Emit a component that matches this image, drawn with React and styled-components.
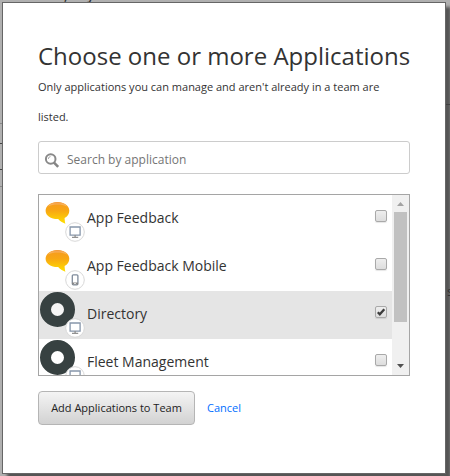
import React, { useState } from "react";
import styled, { createGlobalStyle } from "styled-components";

const GlobalStyle = createGlobalStyle`
  *, *::before, *::after { box-sizing: border-box; }
  body {
    margin: 0;
    background: #b0b0b0;
    font-family: "Open Sans", sans-serif;
    color: #333;
    overflow: hidden;
  }
`;

const Page = styled.main`
  position: relative;
  width: 450px;
  height: 476px;
  padding: 2px;
  overflow: hidden;
`;

const Rule = styled.span`
  position: absolute;
  top: ${(p) => p.$top}px;
  ${(p) => p.$side}: 0;
  width: ${(p) => (p.$side === "left" ? 2 : 4)}px;
  height: 1px;
  background: ${(p) => p.$color};
`;

const Behind = styled.span`
  position: absolute;
  left: ${(p) => p.$left}px;
  top: ${(p) => p.$top}px;
  font-size: 13px;
  font-weight: ${(p) => (p.$light ? 400 : 600)};
  line-height: 16px;
  color: #303030;
`;

const Dialog = styled.section`
  position: relative;
  width: 444px;
  height: 472px;
  padding: 37px 35px 0;
  background: #fff;
  border: 1px solid #666;
  box-shadow: 5px 5px 3px #555;
`;

const Title = styled.h1`
  margin: 0;
  font-size: 24px;
  font-weight: 400;
  line-height: 31px;
  white-space: nowrap;
`;

const Description = styled.p`
  margin: 1px 0 0;
  font-size: 11px;
  line-height: 30px;
`;

const SearchField = styled.label`
  display: flex;
  align-items: center;
  height: 33px;
  margin-top: 9px;
  padding: 4px 0 0 5px;
  border: 1px solid #ccc;
  border-radius: 3px;
`;

const SearchInput = styled.input`
  flex: 1;
  min-width: 0;
  margin-left: 7px;
  padding: 0 0 1px;
  border: 0;
  outline: 0;
  background: none;
  font: 12px "Open Sans", sans-serif;
  color: #333;
  &::placeholder { color: #757575; opacity: 1; }
`;

const ListBox = styled.div`
  display: flex;
  height: 182px;
  margin-top: 20px;
  border: 1px solid #a5a5a5;
  overflow: hidden;
`;

const List = styled.ul`
  flex: 1;
  margin: 0;
  padding: 0;
  list-style: none;
`;

const Row = styled.li`
  display: flex;
  align-items: center;
  height: 48px;
  padding-right: 5px;
  background: ${(p) => (p.$selected ? "#e5e5e5" : "#fff")};
`;

const RowName = styled.span`
  flex: 1;
  margin-left: 2px;
  font-size: 14px;
  line-height: 20px;
  padding-bottom: 2px;
`;

const Check = styled.button`
  width: 12px;
  height: 12px;
  margin-bottom: 6px;
  padding: 0;
  display: flex;
  border: 1px solid #a9a9a9;
  border-radius: 2px;
  background: linear-gradient(#eee, #ddd);
  box-shadow: 0 1px 1px rgba(0, 0, 0, 0.1);
`;

const Scrollbar = styled.div`
  display: flex;
  flex-direction: column;
  align-items: center;
  width: 17px;
  background: #f0f0f0;
`;

const ScrollArrow = styled.svg`
  display: block;
  width: 17px;
  height: 17px;
  flex: none;
`;

const Thumb = styled.div`
  width: 13px;
  height: 110px;
  margin-bottom: auto;
  background: #c1c1c1;
`;

const Actions = styled.footer`
  display: flex;
  align-items: center;
  gap: 12px;
  margin-top: 15px;
`;

const SubmitButton = styled.button`
  width: 157px;
  height: 34px;
  padding: 0 0 2px;
  border: 1px solid #b5b5b5;
  border-radius: 4px;
  background: linear-gradient(#f4f4f4, #d2d2d2);
  font: 11px "Open Sans", sans-serif;
  color: #222;
  white-space: nowrap;
`;

const Cancel = styled.a`
  font-size: 11px;
  line-height: 16px;
  color: #006eff;
  text-decoration: none;
`;

const Glyph = styled.svg`
  display: block;
  flex: none;
`;

function SearchIcon() {
  return (
    <Glyph width="16" height="19" viewBox="0 0 16 19" fill="none">
      <circle cx="6.7" cy="9" r="4.8" stroke="#898989" strokeWidth="2" />
      <path d="M4.3 9a2.4 2.4 0 0 1 2.2-2.4" stroke="#aaa" strokeWidth="1" />
      <path d="m10 12.7 4.2 4.2" stroke="#858585" strokeWidth="2.6" />
    </Glyph>
  );
}

function AppIcon({ kind, device }) {
  return (
    <Glyph width="46" height="48" viewBox="0 0 46 48">
      <defs>
        <linearGradient id="bubble" x1="0" y1="0" x2="0" y2="1">
          <stop offset="0" stopColor="#f69a20" />
          <stop offset=".4" stopColor="#f8a713" />
          <stop offset="1" stopColor="#ffe100" />
        </linearGradient>
        <linearGradient id="shine" x1="0" y1="0" x2="0" y2="1">
          <stop offset="0" stopColor="#f39b45" />
          <stop offset="1" stopColor="#fbc36c" />
        </linearGradient>
      </defs>
      {kind === "bubble" ? (
        <g>
          <path
            d="M18.5 7C25 7 30.3 10.6 30.3 15.7c0 3.2-1.8 5.8-4.7 7.3 .1 2.3.3 4.1.8 5.8-3-1.2-5.5-2.9-7.2-4.8C12.3 24.2 6.6 20.8 6.6 15.7 6.6 10.7 12 7 18.5 7Z"
            fill="url(#bubble)"
          />
          <path d="M9 11.4C12.3 6 24.7 6 28 11.4 22.5 8.8 14.5 8.8 9 11.4Z" fill="url(#shine)" />
        </g>
      ) : (
        <g>
          <circle cx="18.5" cy="18.5" r="12" fill="#fff" fillOpacity=".6" />
          <circle cx="18.5" cy="18.5" r="12" fill="none" stroke="#374141" strokeWidth="11" />
        </g>
      )}
      <circle cx="36" cy="37" r="9.3" fill="#fff" stroke="#d8d8d8" />
      {device === "desktop" ? (
        <g>
          <path d="M31.1 32h10v8.1h-10z" fill="#fff" stroke="#8796aa" strokeWidth="1.3" />
          <path d="M36.1 40v2M33 42.4h6.2" stroke="#929292" strokeWidth="1.4" />
        </g>
      ) : (
        <g>
          <rect x="33.3" y="31.8" width="5.6" height="10" rx="1" fill="#fff" stroke="#7f8b9b" strokeWidth="1.3" />
          <path d="M33 40.5h6" stroke="#878787" strokeWidth="2" />
          <path d="M35.3 40.5h1.4" stroke="#fff" />
        </g>
      )}
    </Glyph>
  );
}

const applications = [
  { name: "App Feedback", kind: "bubble", device: "desktop" },
  { name: "App Feedback Mobile", kind: "bubble", device: "phone" },
  { name: "Directory", kind: "ring", device: "desktop" },
  { name: "Fleet Management", kind: "ring", device: "desktop" },
];

export default function App() {
  const [selected, setSelected] = useState(["Directory"]);
  const toggle = (name) =>
    setSelected((names) => (names.includes(name) ? names.filter((n) => n !== name) : [...names, name]));

  return (
    <Page>
      <GlobalStyle />
      <Behind $left={64} $top={-13}>,</Behind>
      <Behind $left={87} $top={-13}>y</Behind>
      <Rule $side="left" $top={123} $color="#888" />
      <Rule $side="left" $top={143} $color="#444" />
      <Rule $side="left" $top={169} $color="#444" />
      <Rule $side="left" $top={186} $color="#888" />
      <Dialog role="dialog" aria-labelledby="title">
        <Title id="title">Choose one or more Applications</Title>
        <Description>Only applications you can manage and aren't already in a team are listed.</Description>
        <SearchField>
          <SearchIcon />
          <SearchInput placeholder="Search by application" />
        </SearchField>
        <ListBox>
          <List>
            {applications.map(({ name, kind, device }) => {
              const checked = selected.includes(name);
              return (
                <Row key={name} $selected={checked}>
                  <AppIcon kind={kind} device={device} />
                  <RowName>{name}</RowName>
                  <Check type="button" role="checkbox" aria-label={name} aria-checked={checked} onClick={() => toggle(name)}>
                    {checked && (
                      <Glyph width="10" height="10" viewBox="0 0 10 10">
                        <path d="m1.8 5.3 2 2L8.3 2.2" fill="none" stroke="#3c3c3c" strokeWidth="2.3" />
                      </Glyph>
                    )}
                  </Check>
                </Row>
              );
            })}
          </List>
          <Scrollbar>
            <ScrollArrow viewBox="0 0 17 17"><path d="m5 11 3.5-4 3.5 4Z" fill="#a3a3a3" /></ScrollArrow>
            <Thumb />
            <ScrollArrow viewBox="0 0 17 17"><path d="m5 6 3.5 4L12 6Z" fill="#505050" /></ScrollArrow>
          </Scrollbar>
        </ListBox>
        <Actions>
          <SubmitButton type="button">Add Applications to Team</SubmitButton>
          <Cancel href="#cancel">Cancel</Cancel>
        </Actions>
      </Dialog>
      <Rule $side="right" $top={104} $color="#404040" />
      <Behind $left={447} $top={283} $light>s</Behind>
    </Page>
  );
}
